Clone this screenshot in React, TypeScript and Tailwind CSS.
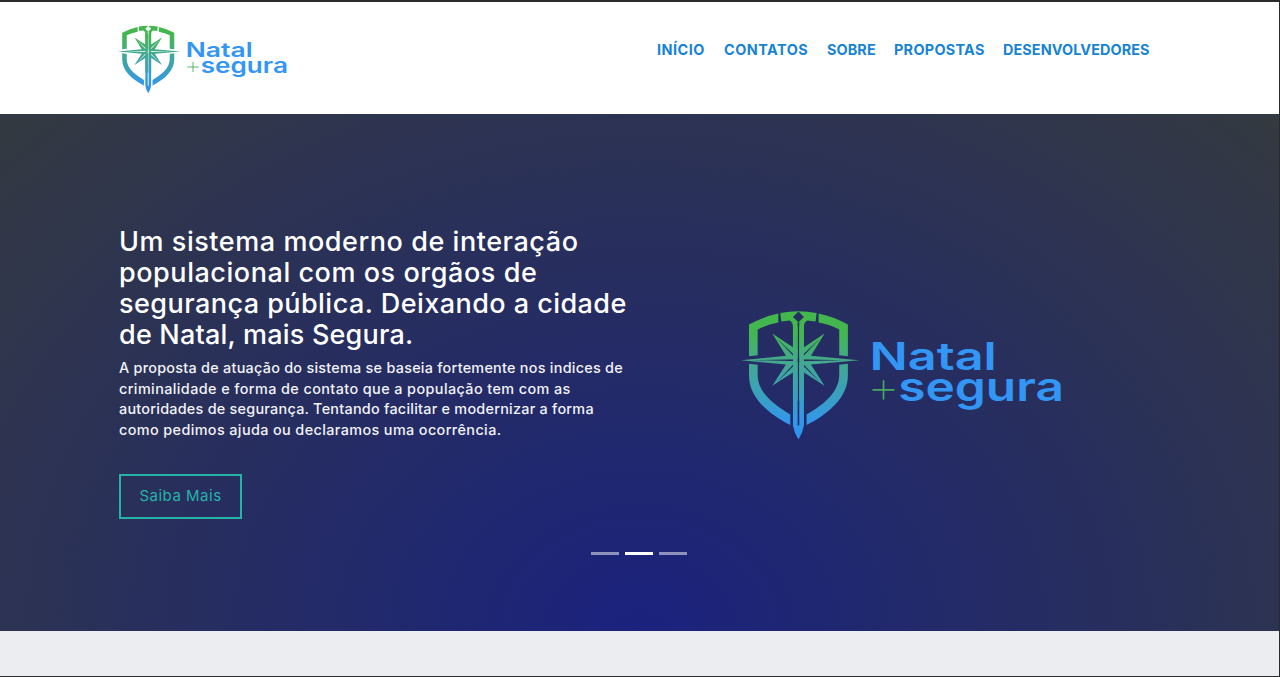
import React from "react";

function Logo({ id, className }: { id: string; className: string }) {
  const paint = `url(#${id}-paint)`;
  return (
    <svg className={className} viewBox="33 30 970 392" role="img" aria-label="Natal + segura">
      <defs>
        <linearGradient id={`${id}-paint`} gradientUnits="userSpaceOnUse" x1="0" y1="33" x2="0" y2="418">
          <stop offset="0" stopColor="#43b84a" />
          <stop offset="0.18" stopColor="#43b652" />
          <stop offset="0.4" stopColor="#43a98f" />
          <stop offset="0.65" stopColor="#3aa0bd" />
          <stop offset="0.85" stopColor="#3398e8" />
          <stop offset="1" stopColor="#3090f0" />
        </linearGradient>
        <mask id={`${id}-blade`} maskUnits="userSpaceOnUse" x="0" y="0" width="420" height="450">
          <rect width="420" height="450" fill="#fff" />
          <path d="M205.500 34L222 50L205.500 66L189 50Z" fill="#000" />
          <path d="M205.500 66V376" stroke="#000" strokeWidth="5" />
        </mask>
        <mask id={`${id}-star`} maskUnits="userSpaceOnUse" x="0" y="0" width="420" height="450">
          <rect width="420" height="450" fill="#fff" />
          <path d="M70 180L205.500 177L341 180L205.500 183Z" fill="#000" />
          <path d="M140 114L207.500 178L271 246L203.500 182Z" fill="#000" />
          <path d="M271 114L207.500 182L140 246L203.500 178Z" fill="#000" />
          <path d="M205.500 60V300" stroke="#000" strokeWidth="5" />
          <circle cx="205.500" cy="180" r="7" fill="#000" />
        </mask>
      </defs>
      <g fill={paint}>
        <path d="M145 40V67Q110 73 83 88V165L57 168V73Q98 50 145 40Z" />
        <path d="M266 40V67Q301 73 328 88V165L354 168V73Q313 50 266 40Z" />
        <path d="M57 191L83 194V225C84 276 127 311 181 343V375C111 338 57 291 57 225Z" />
        <path d="M354 191L328 194V225C327 276 284 311 230 343V375C300 338 354 291 354 225Z" />
        <path
          mask={`url(#${id}-blade)`}
          d="M151 38Q205 28 260 38L257 64L232 61Q223 66 222 78V376L216 398L205.500 418L195 398L189 376V78Q188 66 179 61L154 64Z"
        />
        <path
          mask={`url(#${id}-star)`}
          d="M189 78H222V141L284 100L243 167L388 180L243 193L284 257L222 217V300H189V217L127 257L168 193L33 180L168 167L127 100L189 141Z"
        />
      </g>
      <g fill="#3396f5" fontFamily="Inter, sans-serif" fontWeight="570">
        <text x="419" y="211" fontSize="114" textLength="382" lengthAdjust="spacingAndGlyphs">Natal</text>
        <text x="505" y="304" fontSize="118" textLength="498" lengthAdjust="spacingAndGlyphs">segura</text>
      </g>
      <path d="M428 269H494M461 240V298" stroke="#46ab5c" strokeWidth="5" />
    </svg>
  );
}

const navItems = [
  { label: "INÍCIO", style: "w-[48px] tracking-[0.5px]" },
  { label: "CONTATOS", style: "w-[84px] tracking-[0.5px]" },
  { label: "SOBRE", style: "w-[48px] tracking-[0.1px]" },
  { label: "PROPOSTAS", style: "w-[90px] tracking-[0.3px]" },
  { label: "DESENVOLVEDORES", style: "w-[148px] tracking-[0.1px]" },
];

const titleLines = [
  { text: "Um sistema moderno de interação", style: "tracking-[0.55px]" },
  { text: "populacional com os orgãos de", style: "tracking-[0.55px]" },
  { text: "segurança pública. Deixando a cidade", style: "tracking-[0.45px]" },
  { text: "de Natal, mais Segura.", style: "tracking-[0.2px]" },
];

const bodyLines = [
  { text: "A proposta de atuação do sistema se baseia fortemente nos indices de", style: "tracking-[0.26px]" },
  { text: "criminalidade e forma de contato que a população tem com as", style: "tracking-[0.41px]" },
  { text: "autoridades de segurança. Tentando facilitar e modernizar a forma", style: "tracking-[0.25px]" },
  { text: "como pedimos ajuda ou declaramos uma ocorrência.", style: "tracking-[0.39px]" },
];

export default function App() {
  return (
    <div className="flex h-[677px] w-[1280px] flex-col overflow-hidden border-t-2 border-r border-b border-[#2b2a2d] bg-[#ecedf1] font-['Inter',sans-serif]">
      <header className="flex h-28 shrink-0 items-start justify-between bg-white pr-[128px] pl-[118px]">
        <Logo id="brand" className="mt-[23px] h-[69px] w-[170px]" />
        <nav className="mt-9 flex gap-[19px]">
          {navItems.map((item) => (
            <a key={item.label} href="#" className={`text-[14.4px] leading-6 font-bold whitespace-nowrap text-[#1783d3] ${item.style}`}>
              {item.label}
            </a>
          ))}
        </nav>
      </header>

      <main className="flex h-[517px] shrink-0 flex-col bg-[radial-gradient(ellipse_farthest-corner_at_50%_100%,#1a227e_0%,#343a40_100%)]">
        <section className="flex h-[438px] items-start pl-[119px]">
          <div className="w-[622px] pt-28 text-white">
            <h1 className="text-[27px] leading-[31px] font-[450]">
              {titleLines.map((line) => (
                <span key={line.text} className={`block w-max whitespace-nowrap ${line.style}`}>{line.text}</span>
              ))}
            </h1>
            <p className="mt-2 text-[14.4px] leading-[20.6px] font-medium text-[#f2f3f8]">
              {bodyLines.map((line) => (
                <span key={line.text} className={`block w-max whitespace-nowrap ${line.style}`}>{line.text}</span>
              ))}
            </p>
            <button className="mt-[34px] flex h-[45px] w-[123px] items-center justify-center border-2 border-[#25b3a7] pb-0.5 text-[15px] tracking-[0.5px] text-[#25b3a7]">
              Saiba Mais
            </button>
          </div>
          <Logo id="hero" className="mt-[196px] h-[131px] w-[323px]" />
        </section>
        <div className="flex justify-center gap-1.5 pr-px">
          <span className="h-[3px] w-7 bg-white/50" />
          <span className="h-[3px] w-7 bg-white" />
          <span className="h-[3px] w-7 bg-white/50" />
        </div>
      </main>
    </div>
  );
}
